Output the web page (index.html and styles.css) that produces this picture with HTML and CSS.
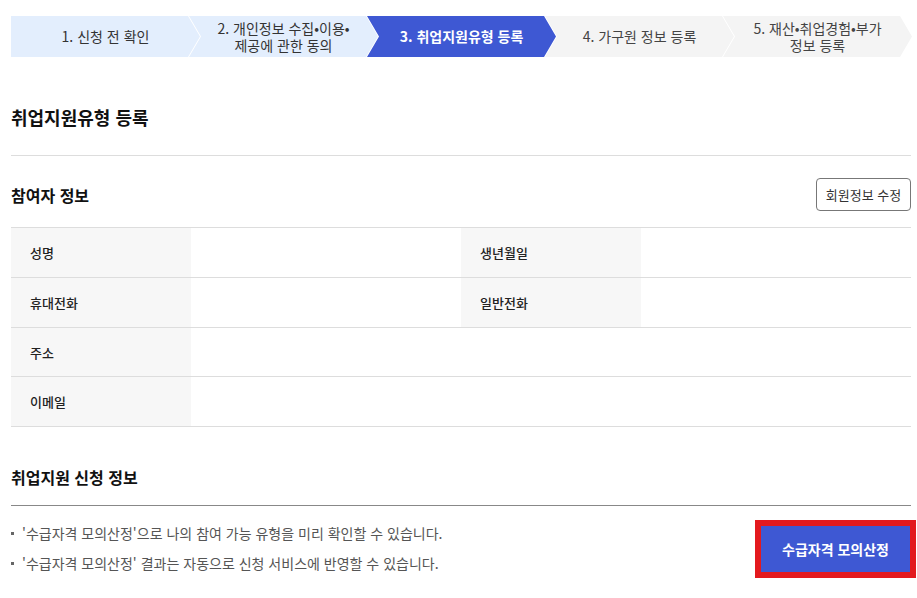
FILE: index.html
```html
<!DOCTYPE html>
<html lang="ko">
<head>
<meta charset="utf-8">
<title>취업지원유형 등록</title>
<link rel="stylesheet" href="styles.css">
</head>
<body>
<div class="page">
  <ol class="steps">
    <li class="step step-done first"><span>1. 신청 전 확인</span></li>
    <li class="step step-done"><span>2. 개인정보 수집•이용•<br>제공에 관한 동의</span></li>
    <li class="step step-current"><span>3. 취업지원유형 등록</span></li>
    <li class="step step-todo"><span>4. 가구원 정보 등록</span></li>
    <li class="step step-todo"><span>5. 재산•취업경험•부가<br>정보 등록</span></li>
  </ol>

  <h2 class="page-title">취업지원유형 등록</h2>

  <div class="section-head">
    <h3 class="section-title">참여자 정보</h3>
    <button class="btn-outline" type="button">회원정보 수정</button>
  </div>

  <table class="info-table">
    <tr>
      <th>성명</th><td></td>
      <th>생년월일</th><td></td>
    </tr>
    <tr>
      <th>휴대전화</th><td></td>
      <th>일반전화</th><td></td>
    </tr>
    <tr class="short">
      <th>주소</th><td colspan="3"></td>
    </tr>
    <tr>
      <th>이메일</th><td colspan="3"></td>
    </tr>
  </table>

  <div class="section-head2">
    <h3 class="section-title">취업지원 신청 정보</h3>
  </div>

  <div class="apply-box">
    <ul class="notes">
      <li>'수급자격 모의산정'으로 나의 참여 가능 유형을 미리 확인할 수 있습니다.</li>
      <li>'수급자격 모의산정' 결과는 자동으로 신청 서비스에 반영할 수 있습니다.</li>
    </ul>
    <button class="btn-primary" type="button">수급자격 모의산정</button>
  </div>
</div>
</body>
</html>
```
FILE: styles.css
```css
* { box-sizing: border-box; }
html, body { margin: 0; padding: 0; background: #fff; }
body {
  font-family: "Noto Sans CJK KR", "Noto Sans", sans-serif;
  color: #222;
}
.page {
  width: 900px;
  margin-left: 11px;
  padding-top: 16px;
}

/* steps */
.steps {
  list-style: none;
  margin: 0;
  padding: 0;
  display: flex;
  height: 41px;
}
.step {
  width: 189px;
  flex: none;
  height: 41px;
  margin-left: -11px;
  display: flex;
  align-items: center;
  justify-content: center;
  text-align: center;
  font-size: 14px;
  line-height: 17px;
  color: #333;
  clip-path: polygon(0 0, calc(100% - 12px) 0, 100% 50%, calc(100% - 12px) 100%, 0 100%, 12px 50%);
}
.step.first {
  margin-left: 0;
  clip-path: polygon(0 0, calc(100% - 12px) 0, 100% 50%, calc(100% - 12px) 100%, 0 100%);
}
.step-done { background: #e3eefd; }
.step-current { background: #3e58d3; color: #fff; font-weight: 700; }
.step-todo { background: #f4f4f4; color: #444; }

/* title */
.page-title {
  margin: 47px 0 0;
  font-size: 18px;
  line-height: 26px;
  font-weight: 700;
  color: #111;
  padding-bottom: 25px;
  border-bottom: 1px solid #ddd;
}

.section-head {
  display: flex;
  justify-content: space-between;
  align-items: center;
  padding: 22px 0 16px;
}
.section-title {
  margin: 0;
  font-size: 16px;
  line-height: 24px;
  font-weight: 700;
  color: #111;
}
.btn-outline {
  height: 33px;
  width: 95px;
  border: 1px solid #777;
  border-radius: 4px;
  background: #fff;
  font-family: inherit;
  font-size: 13px;
  color: #333;
  padding: 0;
}

.info-table {
  width: 900px;
  border-collapse: collapse;
  table-layout: fixed;
  border-top: 1px solid #ddd;
}
.info-table th,
.info-table td {
  height: 50px;
  border-bottom: 1px solid #ddd;
  padding: 0;
}
.info-table .short th,
.info-table .short td { height: 49px; }
.info-table th {
  width: 180px;
  background: #f7f7f7;
  text-align: left;
  padding-left: 19px;
  font-size: 13px;
  font-weight: 500;
  color: #222;
}
.info-table td { width: 270px; }

.section-head2 {
  padding: 38px 0 16px;
  border-bottom: 1px solid #888;
}

.apply-box {
  display: flex;
  justify-content: space-between;
  align-items: flex-start;
  padding: 12px 1px 20px 0;
  border-bottom: 1px solid #eee;
}
.notes {
  list-style: none;
  margin: 0;
  padding: 0;
  font-size: 14px;
  line-height: 30px;
  color: #555;
}
.notes li {
  position: relative;
  padding-left: 11px;
}
.notes li::before {
  content: "";
  position: absolute;
  left: 0;
  top: 14px;
  width: 3px;
  height: 3px;
  background: #666;
}
.btn-primary {
  margin-top: 8px;
  width: 149px;
  height: 46px;
  background: #3e58d3;
  color: #fff;
  border: 0;
  font-family: inherit;
  font-size: 14px;
  font-weight: 700;
  outline: 6px solid #e3191e;
  padding: 0;
}
```
